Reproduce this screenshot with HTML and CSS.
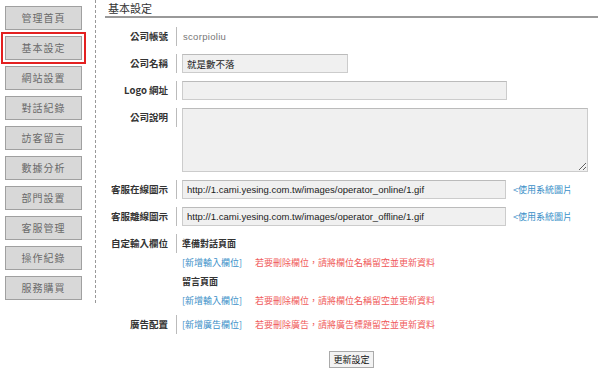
FILE: index.html
```html
<!DOCTYPE html>
<html>
<head>
<meta charset="utf-8">
<link rel="stylesheet" href="styles.css">
</head>
<body>
<div class="page">
  <div class="side">
    <a class="menu">管理首頁</a>
    <a class="menu active">基本設定</a>
    <a class="menu">網站設置</a>
    <a class="menu">對話紀錄</a>
    <a class="menu">訪客留言</a>
    <a class="menu">數據分析</a>
    <a class="menu">部門設置</a>
    <a class="menu">客服管理</a>
    <a class="menu">操作紀錄</a>
    <a class="menu">服務購買</a>
  </div>
  <div class="main">
    <div class="title">基本設定</div>
    <div class="form">
      <div class="row">
        <div class="label">公司帳號</div>
        <div class="value"><span class="account">scorpioliu</span></div>
      </div>
      <div class="row">
        <div class="label">公司名稱</div>
        <div class="value"><input class="field short" type="text" value="就是數不落"></div>
      </div>
      <div class="row">
        <div class="label">Logo 網址</div>
        <div class="value"><input class="field wide" type="text" value=""></div>
      </div>
      <div class="row">
        <div class="label">公司說明</div>
        <div class="value"><textarea class="field memo"></textarea></div>
      </div>
      <div class="row">
        <div class="label">客服在線圖示</div>
        <div class="value inline">
          <input class="field url" type="text" value="http://1.cami.yesing.com.tw/images/operator_online/1.gif">
          <a class="link sys">&lt;使用系統圖片</a>
        </div>
      </div>
      <div class="row">
        <div class="label">客服離線圖示</div>
        <div class="value inline">
          <input class="field url" type="text" value="http://1.cami.yesing.com.tw/images/operator_offline/1.gif">
          <a class="link sys">&lt;使用系統圖片</a>
        </div>
      </div>
      <div class="row">
        <div class="label">自定輸入欄位</div>
        <div class="value">
          <div class="line sub">準備對話頁面</div>
          <div class="line"><a class="link">[新增輸入欄位]</a><span class="note">若要刪除欄位，請將欄位名稱留空並更新資料</span></div>
          <div class="line sub">留言頁面</div>
          <div class="line"><a class="link">[新增輸入欄位]</a><span class="note">若要刪除欄位，請將欄位名稱留空並更新資料</span></div>
        </div>
      </div>
      <div class="row ad">
        <div class="label">廣告配置</div>
        <div class="value">
          <div class="line"><a class="link">[新增廣告欄位]</a><span class="note">若要刪除廣告，請將廣告標題留空並更新資料</span></div>
        </div>
      </div>
    </div>
    <div class="submit"><button type="submit">更新設定</button></div>
  </div>
</div>
</body>
</html>
```

FILE: styles.css
```css
body {
  margin: 0;
  font-family: "Noto Sans CJK TC", sans-serif;
  background: #fff;
}

.page {
  display: flex;
  align-items: flex-start;
}

/* left menu */
.side {
  width: 90px;
  height: 297px;
  padding: 6px 0 0 5px;
  border-right: 1px dashed #999;
}

.menu {
  display: block;
  width: 75px;
  height: 22px;
  line-height: 22px;
  margin-bottom: 6px;
  border: 1px solid #a0a0a0;
  background: #d8d8d8;
  color: #6a6a6a;
  font-size: 10px;
  letter-spacing: 1px;
  text-align: center;
}

.menu.active {
  outline: 2px solid #e32020;
  outline-offset: 2px;
}

/* main area */
.main {
  flex: 1;
  padding: 0 2px 0 9px;
}

.title {
  height: 16px;
  line-height: 16px;
  padding-left: 3px;
  font-size: 11px;
  color: #333;
  border-bottom: 2px solid #999;
}

.form {
  padding-top: 9px;
}

.row {
  display: flex;
  align-items: flex-start;
  margin-bottom: 8px;
}

.label {
  width: 63px;
  height: 19px;
  line-height: 19px;
  padding-right: 8px;
  border-right: 1px solid #bbb;
  text-align: right;
  font-size: 9.5px;
  font-weight: bold;
  color: #333;
  white-space: nowrap;
}

.value {
  display: flex;
  flex-direction: column;
  padding-left: 5px;
  font-size: 9px;
}

.value.inline {
  flex-direction: row;
  align-items: center;
}

.account {
  line-height: 19px;
  padding-left: 1px;
  font-family: "Liberation Sans", sans-serif;
  font-size: 9.5px;
  letter-spacing: 0.3px;
  color: #777;
}

.field {
  box-sizing: border-box;
  height: 19px;
  margin: 0;
  padding: 0 4px;
  border: 1px solid #ccc;
  border-top-color: #bbb;
  background: #f0f0f0;
  font-family: "Liberation Sans", "Noto Sans CJK TC", sans-serif;
  font-size: 9.5px;
  color: #222;
}

.short { width: 166px; }
.wide { width: 325px; }
.url { width: 324px; }

.memo {
  width: 406px;
  height: 64px;
  resize: both;
}

.link {
  color: #3a8fc8;
  white-space: nowrap;
}

.sys {
  margin-left: 7px;
}

.line {
  height: 19px;
  line-height: 19px;
  white-space: nowrap;
}

.line.sub {
  font-weight: bold;
  color: #333;
}

.note {
  margin-left: 13px;
  color: #f05a5a;
}

.ad {
  margin-top: -3px;
}

.submit {
  display: flex;
  justify-content: center;
  padding-top: 9px;
}

.submit button {
  height: 17px;
  margin: 0;
  padding: 0 3px;
  border: 1px solid #aaa;
  background: #f3f3f3;
  font-family: "Noto Sans CJK TC", sans-serif;
  font-size: 9px;
  line-height: 15px;
  color: #111;
}
```
